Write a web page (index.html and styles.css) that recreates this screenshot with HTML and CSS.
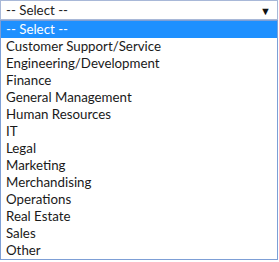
FILE: index.html
```html
<!DOCTYPE html>
<html lang="en">
<head>
    <meta charset="UTF-8">
    <title>Department Select</title>
    <link rel="stylesheet" href="styles.css">
</head>
<body>
    <div class="field">
        <div class="select-box">
            <span>-- Select --</span>
            <span class="arrow">&#9660;</span>
        </div>
        <ul class="options">
            <li class="selected">-- Select --</li>
            <li>Customer Support/Service</li>
            <li>Engineering/Development</li>
            <li>Finance</li>
            <li>General Management</li>
            <li>Human Resources</li>
            <li>IT</li>
            <li>Legal</li>
            <li>Marketing</li>
            <li>Merchandising</li>
            <li>Operations</li>
            <li>Real Estate</li>
            <li>Sales</li>
            <li>Other</li>
        </ul>
        <div class="next-label">Min Level</div>
    </div>
</body>
</html>
```

FILE: styles.css
```css
body {
    margin: 0;
    font-family: Lato, "Liberation Sans", sans-serif;
    background-color: #fff;
    color: #222;
}
.field {
    width: 279px;
    height: 262px;
    overflow: hidden;
}
.select-box {
    display: flex;
    justify-content: space-between;
    align-items: center;
    height: 18px;
    margin-right: 1px;
    padding: 0 6px 0 5px;
    border: 1px solid #a8b8d8;
    font-size: 13.3px;
    color: #222;
}
.arrow {
    font-size: 11px;
    color: #111;
}
.options {
    list-style: none;
    margin: 0;
    padding: 0;
    width: 276px;
    border: 1px solid #7d9fd6;
    font-size: 13.3px;
}
.options li {
    height: 17px;
    line-height: 17px;
    padding-left: 5px;
    color: #1a1a1a;
}
.options li.selected {
    background-color: #1e90ff;
    color: #fff;
}
.next-label {
    padding-left: 8px;
    font-size: 13px;
    line-height: 15px;
    color: #999;
}
```
